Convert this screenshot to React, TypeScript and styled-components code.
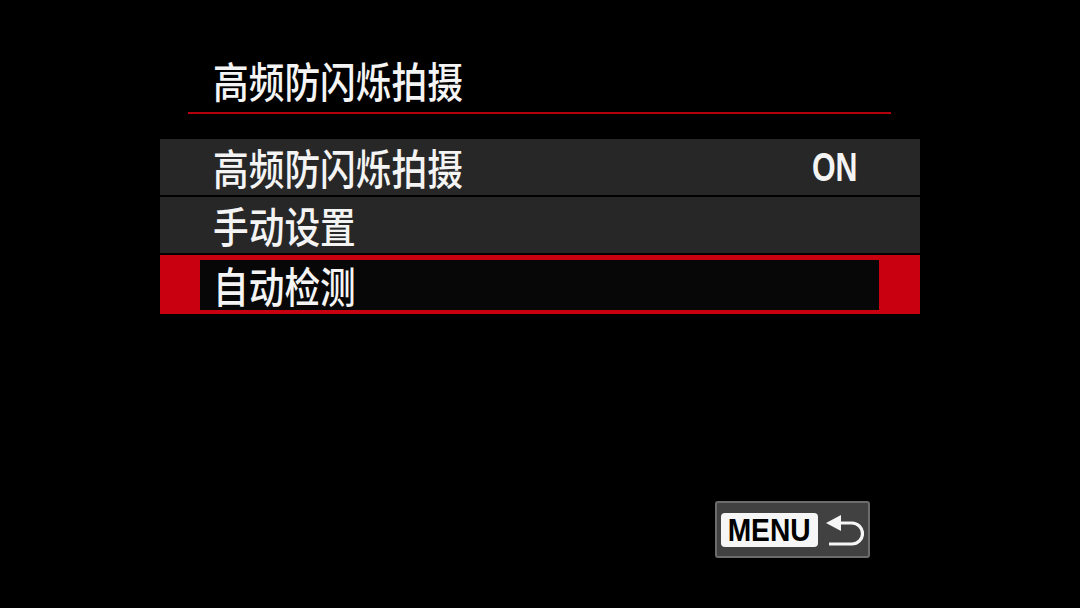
import React from "react";
import styled, { createGlobalStyle } from "styled-components";

const Global = createGlobalStyle`
  html, body { margin: 0; padding: 0; background: #000; }
  body { font-family: "Noto Sans CJK SC", "Noto Sans", sans-serif; }
`;

const Screen = styled.div`
  width: 1080px;
  height: 608px;
  box-sizing: border-box;
  background: #000;
  padding: 56px 160px 0 160px;
  display: flex;
  flex-direction: column;
  overflow: hidden;
`;

const TitleBar = styled.div`
  margin: 0 29px 0 28px;
  padding: 0 0 8px 25px;
  border-bottom: 2px solid #b3000f;
  height: 48px;
  display: flex;
  align-items: center;
`;

const CjkText = styled.span`
  display: inline-block;
  font-family: "Noto Sans CJK SC", sans-serif;
  font-weight: 500;
  font-size: 42px;
  line-height: 48px;
  color: #f4f4f4;
  white-space: nowrap;
  transform: scaleX(0.85);
  transform-origin: left center;
`;

const List = styled.div`
  margin-top: 25px;
  display: flex;
  flex-direction: column;
  gap: 2px;
`;

const Row = styled.div<{ $selected?: boolean }>`
  height: ${(p) => (p.$selected ? "59px" : "56px")};
  box-sizing: border-box;
  background: ${(p) => (p.$selected ? "#c8000f" : "#272727")};
  display: flex;
  align-items: stretch;
  padding: ${(p) => (p.$selected ? "5px 41px 4px 40px" : "0 63px 0 53px")};
`;

const RowInner = styled.div<{ $selected?: boolean }>`
  flex: 1;
  display: flex;
  align-items: center;
  justify-content: space-between;
  background: ${(p) => (p.$selected ? "#070707" : "transparent")};
  padding-left: ${(p) => (p.$selected ? "13px" : "0")};
`;

const Value = styled.span`
  display: inline-block;
  font-family: "Liberation Sans", Arial, sans-serif;
  font-weight: 700;
  font-size: 41px;
  line-height: 48px;
  color: #f4f4f4;
  transform: scaleX(0.74);
  transform-origin: right center;
`;

const Footer = styled.div`
  margin-top: auto;
  margin-bottom: 50px;
  display: flex;
  justify-content: flex-end;
  padding-right: 50px;
`;

const MenuButton = styled.div`
  width: 155px;
  height: 57px;
  box-sizing: border-box;
  background: #414141;
  border: 2px solid #6c6c6c;
  border-radius: 3px;
  display: flex;
  align-items: center;
  padding-left: 4px;
  gap: 6px;
`;

const MenuPill = styled.div`
  width: 97px;
  height: 34px;
  flex-shrink: 0;
  background: #f6f6f6;
  border-radius: 4px;
  display: flex;
  align-items: center;
  justify-content: center;
`;

const MenuLabel = styled.span`
  display: inline-block;
  font-family: "Liberation Sans", Arial, sans-serif;
  font-weight: 700;
  font-size: 32px;
  line-height: 34px;
  color: #000;
  white-space: nowrap;
  transform: scaleX(0.88);
`;

const ReturnIcon = () => (
  <svg width="40" height="34" viewBox="0 0 40 34">
    <polygon points="2,10 17,2 17,18" fill="#f6f6f6" />
    <path
      d="M16 10 H28 A10.5 10.5 0 0 1 28 31 H5"
      fill="none"
      stroke="#f6f6f6"
      strokeWidth="3.2"
    />
  </svg>
);

export default function App() {
  return (
    <>
      <Global />
      <Screen>
        <TitleBar>
          <CjkText>高频防闪烁拍摄</CjkText>
        </TitleBar>
        <List>
          <Row>
            <RowInner>
              <CjkText>高频防闪烁拍摄</CjkText>
              <Value>ON</Value>
            </RowInner>
          </Row>
          <Row>
            <RowInner>
              <CjkText>手动设置</CjkText>
            </RowInner>
          </Row>
          <Row $selected>
            <RowInner $selected>
              <CjkText>自动检测</CjkText>
            </RowInner>
          </Row>
        </List>
        <Footer>
          <MenuButton>
            <MenuPill>
              <MenuLabel>MENU</MenuLabel>
            </MenuPill>
            <ReturnIcon />
          </MenuButton>
        </Footer>
      </Screen>
    </>
  );
}
